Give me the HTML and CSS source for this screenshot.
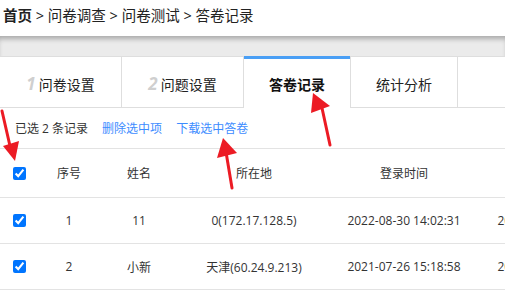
FILE: index.html
```html
<!DOCTYPE html>
<html lang="zh">
<head>
<meta charset="utf-8">
<link rel="stylesheet" href="styles.css">
</head>
<body>
<div class="page">
  <div class="crumb"><b>首页</b> &gt; 问卷调查 &gt; 问卷测试 &gt; 答卷记录</div>
  <div class="band"></div>
  <div class="tabs">
    <div class="tab t1"><i class="num">1</i> 问卷设置</div>
    <div class="tab t2"><i class="num">2</i> 问题设置</div>
    <div class="tab t3 active">答卷记录</div>
    <div class="tab t4">统计分析</div>
  </div>
  <div class="toolbar">
    <span>已选 2 条记录</span>
    <a class="link">删除选中项</a>
    <a class="link">下载选中答卷</a>
  </div>
  <div class="table">
    <div class="row head">
      <div class="cell"><input type="checkbox" checked></div>
      <div class="cell">序号</div>
      <div class="cell">姓名</div>
      <div class="cell">所在地</div>
      <div class="cell">登录时间</div>
      <div class="cell">提交时间</div>
    </div>
    <div class="row">
      <div class="cell"><input type="checkbox" checked></div>
      <div class="cell">1</div>
      <div class="cell">11</div>
      <div class="cell">0(172.17.128.5)</div>
      <div class="cell">2022-08-30 14:02:31</div>
      <div class="cell">2022-08-30 14:03:05</div>
    </div>
    <div class="row">
      <div class="cell"><input type="checkbox" checked></div>
      <div class="cell">2</div>
      <div class="cell">小新</div>
      <div class="cell">天津(60.24.9.213)</div>
      <div class="cell">2021-07-26 15:18:58</div>
      <div class="cell">2021-07-26 15:20:12</div>
    </div>
  </div>
  <svg class="arrows" width="505" height="301" viewBox="0 0 505 301">
    <g fill="#ec1b24" stroke="#ec1b24" stroke-width="3" stroke-linecap="round">
      <line x1="2" y1="111" x2="10" y2="146"/>
      <polygon stroke="none" points="3,146 19,141 15,161"/>
      <line x1="232" y1="188" x2="226" y2="152"/>
      <polygon stroke="none" points="223,138 217,158 237,153"/>
      <line x1="330" y1="145" x2="322" y2="108"/>
      <polygon stroke="none" points="313,93 311,113 330,106"/>
    </g>
  </svg>
</div>
</body>
</html>
```

FILE: styles.css
```css
html, body {
  margin: 0;
  padding: 0;
  background: #fff;
}
body {
  width: 505px;
  height: 301px;
  overflow: hidden;
  font-family: "Open Sans", "Noto Sans CJK SC", sans-serif;
  color: #333;
}
.page {
  position: relative;
  width: 505px;
  height: 301px;
  overflow: hidden;
}
.crumb {
  height: 36px;
  line-height: 32px;
  padding-left: 3px;
  font-size: 14.5px;
  color: #222;
  white-space: nowrap;
}
.crumb b {
  font-weight: bold;
}
.band {
  height: 20px;
  background: #ebebeb;
  box-shadow: inset 0 5px 5px -2px rgba(0, 0, 0, 0.28);
}
.tabs {
  display: flex;
  height: 50px;
  border-top: 1px solid #dedede;
  border-bottom: 1px solid #dedede;
  background: #fff;
}
.tab {
  box-sizing: border-box;
  border-right: 1px solid #dedede;
  display: flex;
  align-items: center;
  justify-content: center;
  padding-top: 3px;
  font-size: 14px;
  color: #222;
  white-space: nowrap;
}
.t1, .t2 { width: 122px; }
.t3, .t4 { width: 107px; }
.num {
  font-size: 17px;
  font-weight: bold;
  color: #cfcfcf;
  margin-right: 3px;
}
.active {
  position: relative;
  margin-bottom: -1px;
  background: #fff;
  font-weight: bold;
  color: #111;
}
.active::before {
  content: "";
  position: absolute;
  left: 0;
  right: 0;
  top: -1px;
  height: 3px;
  background: #4a9ff5;
}
.toolbar {
  height: 40px;
  display: flex;
  align-items: center;
  gap: 14px;
  padding-left: 15px;
  font-size: 12px;
  border-bottom: 1px solid #e3e3e3;
  white-space: nowrap;
}
.link {
  color: #3d8cff;
}
.table {
  width: 629px;
  font-size: 12px;
}
.row {
  display: grid;
  grid-template-columns: 39px 60px 80px 150px 150px 150px;
  height: 46px;
  box-sizing: border-box;
  border-bottom: 1px solid #e3e3e3;
}
.row.head {
  height: 49px;
}
.cell {
  display: flex;
  align-items: center;
  justify-content: center;
  white-space: nowrap;
}
.cell input {
  margin: 0;
  width: 13px;
  height: 13px;
}
.arrows {
  position: absolute;
  left: 0;
  top: 0;
  pointer-events: none;
}
```
